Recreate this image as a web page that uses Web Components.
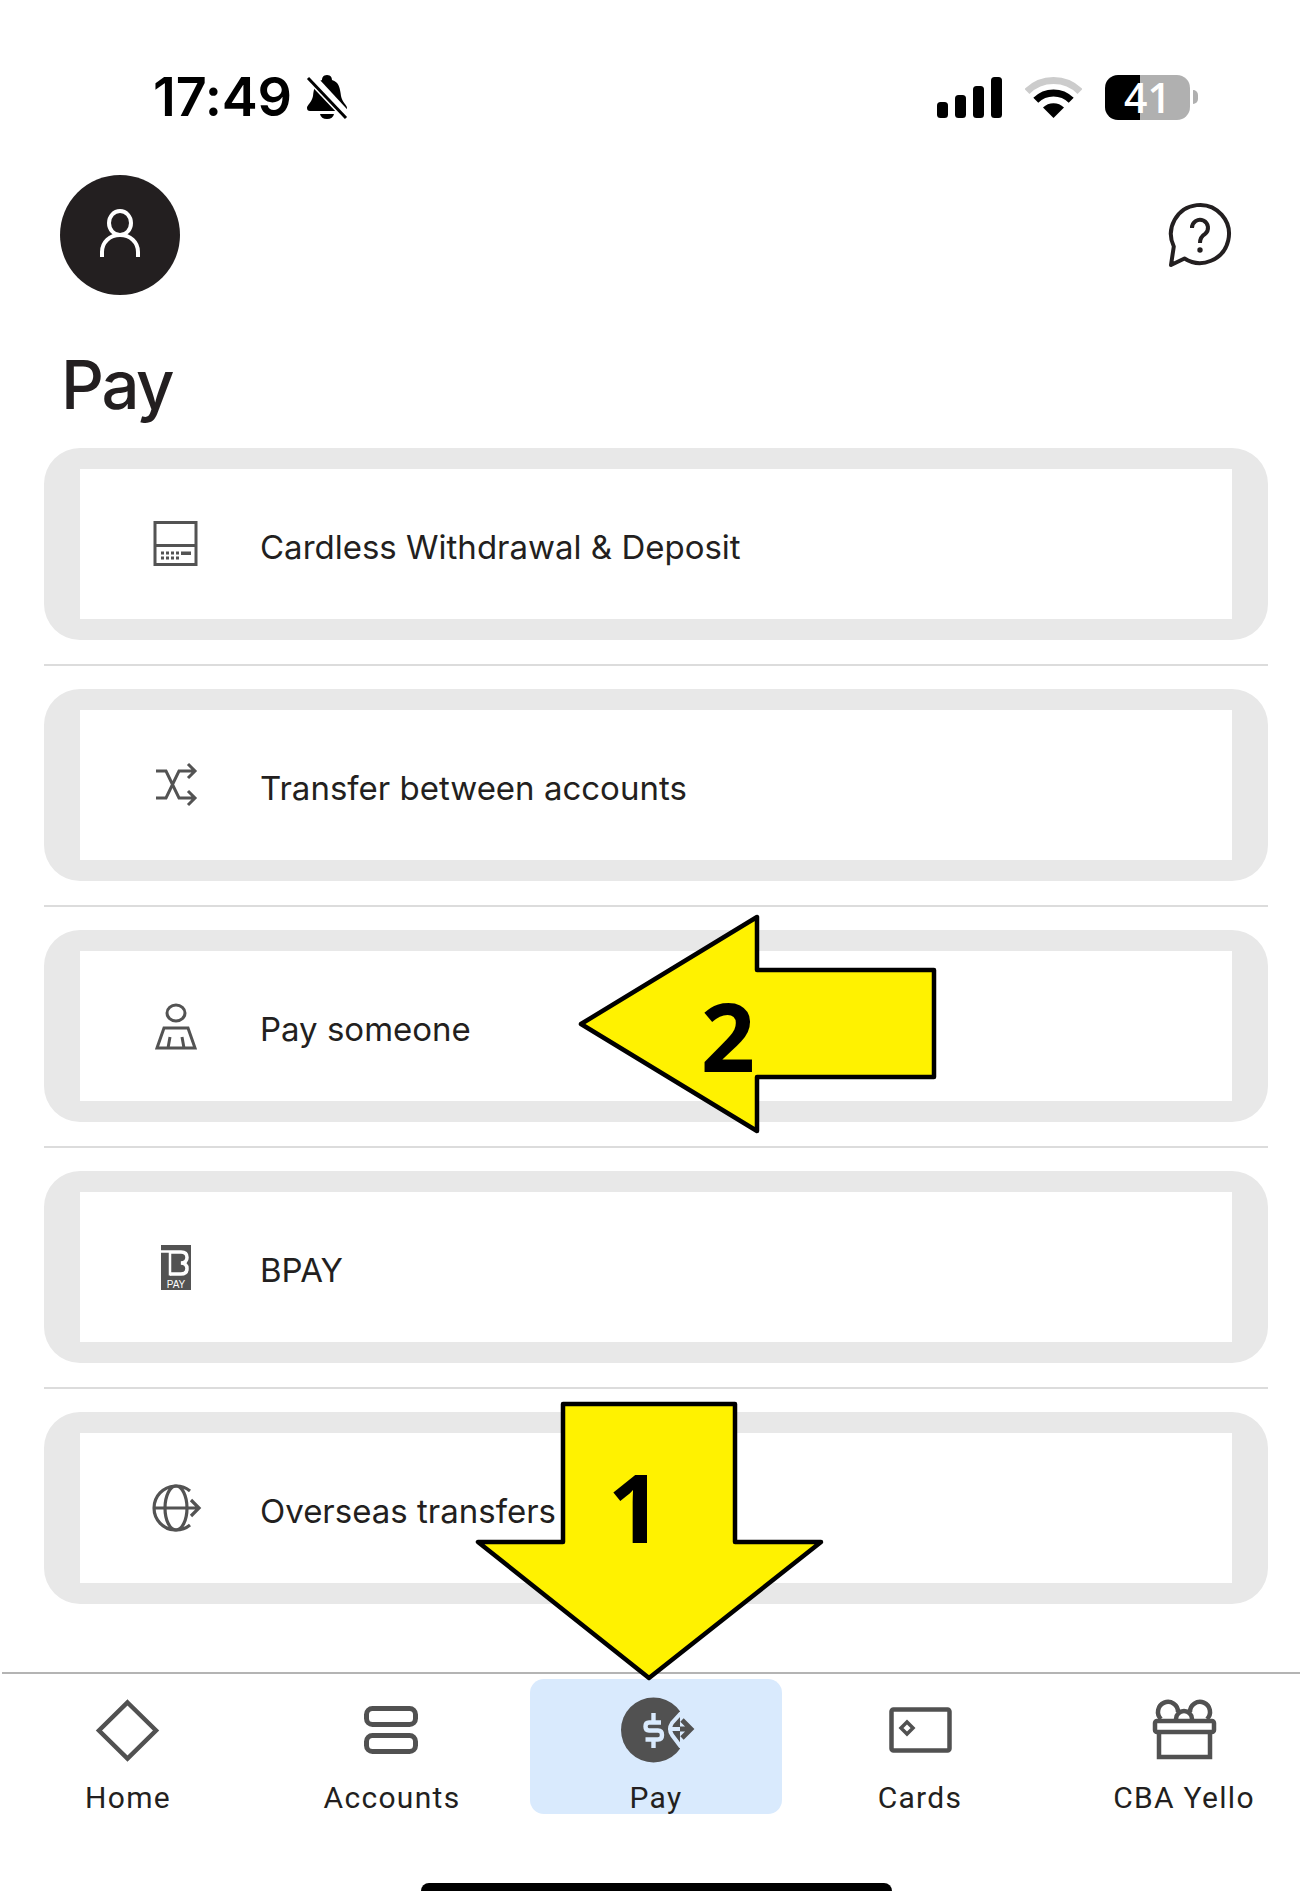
<!DOCTYPE html>
<html lang="en"><head><meta charset="utf-8"><title>Pay</title>
<style>html,body{margin:0;background:#fff}</style></head>
<body>
<app-shell>
  <status-bar time="17:49" battery="41"></status-bar>
  <top-bar></top-bar>
  <page-title>Pay</page-title>
  <pay-list>
    <pay-row>
      <svg slot="icon" width="60" height="60" viewBox="0 0 60 60"><g fill="none" stroke="#535353" stroke-width="3"><rect x="9" y="8.500" width="41" height="42"/><path d="M8 31.500H51"/></g><g fill="#535353"><path d="M15 37.500h3v3h-3zM20 37.500h3v3h-3zM25 37.500h3v3h-3zM30 37.500h3v3h-3zM15 42.500h3v3h-3zM20 42.500h3v3h-3zM25 42.500h3v3h-3zM30 42.500h3v3h-3zM35 37.500h10v3.500H35z"/></g></svg>
      Cardless Withdrawal &amp; Deposit
    </pay-row>
    <pay-row>
      <svg slot="icon" width="60" height="60" viewBox="0 0 60 60"><g fill="none" stroke="#535353" stroke-width="3"><path d="M10 16H20L33 43H48M10 43H20L33 16H48M42 9L49 16L42 23M42 36L49 43L42 50"/></g></svg>
      Transfer between accounts
    </pay-row>
    <pay-row>
      <svg slot="icon" width="60" height="60" viewBox="0 0 60 60"><g fill="none" stroke="#535353" stroke-width="3"><ellipse cx="30" cy="17" rx="9" ry="8"/><path d="M18 32H42L49 52H11ZM22 52L24 41M38 52L36 41"/></g></svg>
      Pay someone
    </pay-row>
    <pay-row>
      <svg slot="icon" width="60" height="60" viewBox="0 0 60 60"><rect x="15" y="8" width="30" height="45" fill="#535353"/><g fill="none" stroke="#fff"><path d="M15 14.500H24M24 14V38.500" stroke-width="2.500"/><path d="M24 15H35Q41 15 41 20.500Q41 25.500 35 26Q41 26.500 41 31.500Q41 37 35 37H24" stroke-width="3.500"/></g><text x="30" y="51" text-anchor="middle" font-family="Liberation Sans, sans-serif" font-size="10" fill="#fff">PAY</text></svg>
      BPAY
    </pay-row>
    <pay-row last>
      <svg slot="icon" width="60" height="60" viewBox="0 0 60 60"><g fill="none" stroke="#535353" stroke-width="3.200"><path d="M44 13A22 22 0 1 0 44 47"/><ellipse cx="30" cy="30" rx="11" ry="22"/><path d="M7 30H52M45 22L53 30L45 38"/></g></svg>
      Overseas transfers
    </pay-row>
  </pay-list>
  <bottom-nav>
    <nav-item label="Home"><svg width="80" height="72" viewBox="0 0 80 72"><path d="M39.500 8.500L68 36.500L39.500 64.500L11 36.500Z" fill="none" stroke="#515151" stroke-width="4.500"/></svg></nav-item>
    <nav-item label="Accounts"><svg width="80" height="72" viewBox="0 0 80 72"><g fill="none" stroke="#515151" stroke-width="5"><rect x="14.500" y="14.500" width="49" height="16" rx="6"/><rect x="14.500" y="41.500" width="49" height="16" rx="6"/></g></svg></nav-item>
    <nav-item label="Pay" active><svg width="80" height="72" viewBox="0 0 80 72"><circle cx="37.500" cy="36" r="32.500" fill="#515151"/><rect x="64" y="0" width="16" height="72" fill="#d9eafd"/><g fill="none" stroke="#d9eafd"><path d="M45 28.500H33Q29.500 28.500 29.500 32.500Q29.500 36.500 33 36.500H42Q46 36.500 46 41Q46 45.500 42 45.500H29.500M37.500 19V28M37.500 45V54" stroke-width="4.400"/><path d="M65 19L56 29Q52 35 56 41L65 53" stroke-width="4"/><path d="M54 35H64" stroke-width="4"/></g><path d="M64 35H74M66 26L75 35L66 44" fill="none" stroke="#515151" stroke-width="4.800"/></svg></nav-item>
    <nav-item label="Cards"><svg width="80" height="72" viewBox="0 0 80 72"><g fill="none" stroke="#515151"><rect x="11.500" y="15.500" width="58" height="41" rx="2" stroke-width="4.500"/><path d="M27 28L33 34L27 40L21 34Z" stroke-width="3.500"/></g></svg></nav-item>
    <nav-item label="CBA Yello"><svg width="80" height="72" viewBox="0 0 80 72"><g fill="none" stroke="#515151" stroke-width="4.500"><path d="M17 25A10 10 0 1 1 34 18M63 25A10 10 0 1 0 46 18M32 25A8 8 0 0 1 48 25"/><rect x="11" y="27" width="59" height="11" rx="2"/><path d="M15 38V63H66V38"/></g></svg></nav-item>
  </bottom-nav>
  <home-indicator></home-indicator>
  <callout-arrow num="2" points="581,1024 757,917 757,970 934,970 934,1077 757,1077 757,1131" tx="728" ty="1072"></callout-arrow>
  <callout-arrow num="1" points="563,1404 735,1404 735,1542 821,1542 649,1678 478,1542 563,1542" tx="635" ty="1543"></callout-arrow>
</app-shell>
<script>
const FONT = 'Inter, "Liberation Sans", sans-serif';
function def(name, css, html){
  customElements.define(name, class extends HTMLElement{
    constructor(){super();const r=this.attachShadow({mode:'open'});
      r.innerHTML='<style>'+css+'</style>'+html;}
  });
}
def('app-shell', `:host{display:block;position:relative;width:1300px;height:1891px;overflow:hidden;background:#fff;color:#231f20;font-family:${FONT}}`, '<slot></slot>');

const statusTpl = `
<style>
:host{display:flex;align-items:center;height:46px;margin-top:74px;padding-left:153px;padding-right:102px}
.time{font-size:54px;font-weight:600;line-height:46px;color:#000;width:153px;letter-spacing:-.2px}
.sp{flex:1}
.sig{margin-right:23px;display:block}
.wifi{margin-right:23px;display:block}
.bat{width:85px;height:45px;border-radius:13px;background:linear-gradient(90deg,#000 41%,#b0b0b0 41%);color:#fff;font-family:"Open Sans",sans-serif;font-size:41px;font-weight:600;display:flex;align-items:center;justify-content:center;line-height:1}
.nub{width:5px;height:14px;margin-left:3px;background:#b0b0b0;border-radius:0 7px 7px 0}
svg{flex:none}
</style>
<span class="time"></span>
<svg width="42" height="46" viewBox="0 0 42 46"><path d="M21 1C17 1 16 4 16 6C9 8 8 14 7 22C6 28 1 31 1 34Q1 37 4 37H38Q41 37 41 34C41 31 36 28 35 22C34 14 33 8 26 6C26 4 25 1 21 1Z"/><path d="M14 40H28Q27 45 21 45Q15 45 14 40Z"/><path d="M5 0L44 42" stroke="#fff" stroke-width="5"/><path d="M2 4L40 44" stroke="#fff" stroke-width="6"/><path d="M2 4L40 44" stroke="#000" stroke-width="3"/></svg>
<span class="sp"></span>
<svg class="sig" width="65" height="41" viewBox="0 0 65 41"><rect x="0" y="25" width="11" height="16" rx="3.500"/><rect x="18" y="18" width="11" height="23" rx="3.500"/><rect x="36" y="9" width="11" height="32" rx="3.500"/><rect x="54" y="0" width="11" height="41" rx="3.500"/></svg>
<svg class="wifi" width="57" height="41" viewBox="0 0 57 41"><g fill="none" stroke-width="7"><path d="M2 14.500A37.500 37.500 0 0 1 55 14.500" stroke="#ccc"/><path d="M10.800 23.300A25 25 0 0 1 46.200 23.300" stroke="#000"/></g><path d="M28.500 41L18 30.500A15 15 0 0 1 39 30.500Z"/></svg>
<span class="bat"></span><span class="nub"></span>`;
customElements.define('status-bar', class extends HTMLElement{
  constructor(){super();const r=this.attachShadow({mode:'open'});r.innerHTML=statusTpl;
    r.querySelector('.time').textContent=this.getAttribute('time');
    r.querySelector('.bat').textContent=this.getAttribute('battery');}
});
def('top-bar', `:host{display:flex;align-items:center;justify-content:space-between;height:120px;margin-top:55px;padding:0 67px 0 60px}
.av{width:120px;height:120px;border-radius:50%;background:#231f20;display:flex;align-items:center;justify-content:center}`,
`<div class="av"><svg width="60" height="60" viewBox="0 0 60 60"><g fill="none" stroke="#fff" stroke-width="4"><ellipse cx="30" cy="18" rx="11" ry="12"/><path d="M12 52V47C12 37 20 30 30 30C40 30 48 37 48 47V52"/></g></svg></div>
<svg width="66" height="66" viewBox="0 0 66 66"><g fill="none" stroke="#231f20" stroke-width="4" stroke-linejoin="round"><path d="M6.800 44.500L4 63L17.500 56.500A29 29 0 1 0 6.800 44.500Z"/><path d="M25 26A8 8 0 1 1 38 32Q33 35 33 41"/></g><circle cx="33" cy="48" r="2.700" fill="#231f20"/></svg>`);
def('page-title', `:host{display:block;font-size:67px;font-weight:500;line-height:80px;margin-top:50px;padding-left:61px;letter-spacing:-2.3px;color:#231f20}`, '<slot></slot>');
def('pay-list', `:host{display:flex;flex-direction:column;padding:0 32px 0 44px;margin-top:23px}`, '<slot></slot>');
def('pay-row', `:host{display:block;box-sizing:border-box}
.card{box-sizing:border-box;height:192px;border:solid #e8e8e8;border-width:21px 36px;border-radius:36px;background:#fff;display:flex;align-items:center;padding-left:66px;gap:54px;font-size:33px;line-height:1.2;color:#231f20}
.ic{width:60px;height:60px;flex:none;display:block}
.txt{white-space:nowrap;position:relative;top:4px}
hr{border:0;height:2px;background:#dcdcdc;margin:24px 0 23px}
:host([last]) hr{display:none}`,
`<div class="card"><div class="ic"><slot name="icon"></slot></div><div class="txt"><slot></slot></div></div><hr>`);
def('bottom-nav', `:host{display:block;margin:68px 0 0 2px}
.line{height:2px;background:#b4b4b4}
.row{display:flex;gap:12px;margin-top:5px;width:1308px}`, `<div class="line"></div><div class="row"><slot></slot></div>`);
customElements.define('nav-item', class extends HTMLElement{
  constructor(){super();const r=this.attachShadow({mode:'open'});
   r.innerHTML=`<style>:host{display:flex;flex-direction:column;align-items:center;box-sizing:border-box;width:252px;height:135px;padding-top:15px;border-radius:14px;flex:none}
   :host([active]){background:#d9eafd}
   .ic{height:72px;width:80px}
   .l{margin-top:15px;line-height:34px;font-size:30px;letter-spacing:1.3px;color:#231f20;white-space:nowrap;font-family:Roboto,Inter,sans-serif}</style>
   <div class="ic"><slot></slot></div><div class="l"></div>`;
   r.querySelector('.l').textContent=this.getAttribute('label');}
});
def('home-indicator', `:host{display:block;width:471px;height:8px;margin:69px 0 0 421px;background:#000;border-radius:12px 12px 0 0}`, '');
customElements.define('callout-arrow', class extends HTMLElement{
  constructor(){super();const r=this.attachShadow({mode:'open'});
   r.innerHTML=`<style>:host{position:absolute;left:0;top:0;display:block;width:1300px;height:1891px;pointer-events:none}svg{display:block}</style>
   <svg width="1300" height="1891" viewBox="0 0 1300 1891"><polygon points="${this.getAttribute('points')}" fill="#fff200" stroke="#000" stroke-width="4.500" stroke-linejoin="round"/><text x="${this.getAttribute('tx')}" y="${this.getAttribute('ty')}" text-anchor="middle" font-family="Open Sans" font-weight="700" font-size="95" fill="#000">${this.getAttribute('num')}</text></svg>`;}
});
</script>
</body></html>
